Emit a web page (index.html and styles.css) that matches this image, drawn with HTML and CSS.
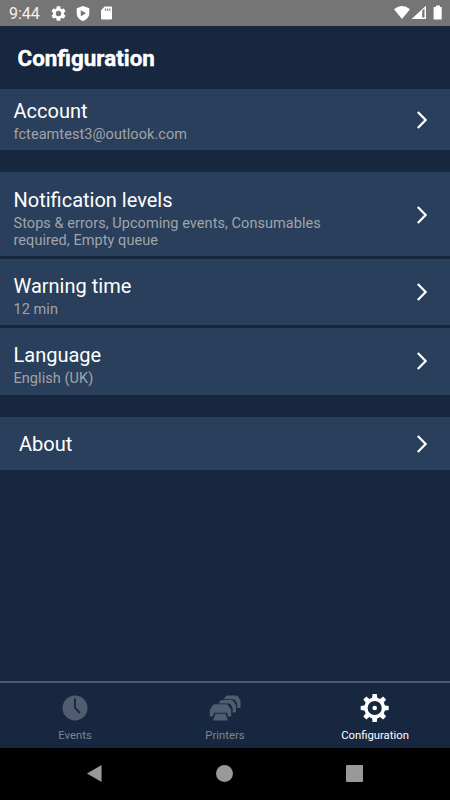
FILE: index.html
```html
<!DOCTYPE html>
<html lang="en">
<head>
<meta charset="utf-8">
<title>Configuration</title>
<link rel="stylesheet" href="styles.css">
</head>
<body>
<div class="status">
  <span class="clock">9:44</span>
  <svg class="gear" viewBox="2 2 20 20"><path d="M19.14 12.94a7 7 0 0 0 0-1.88l2.03-1.58a.5.5 0 0 0 .12-.61l-1.92-3.32a.5.5 0 0 0-.59-.22l-2.39.96a7 7 0 0 0-1.62-.94l-.36-2.54a.5.5 0 0 0-.48-.41h-3.84a.5.5 0 0 0-.47.41l-.36 2.54a7.300 7.300 0 0 0-1.620.94l-2.390-.96a.5.5 0 0 0-.59.22L2.740 8.870a.5.5 0 0 0 .12.61l2.030 1.580a7 7 0 0 0 0 1.880l-2.030 1.580a.5.5 0 0 0-.12.61l1.920 3.320c.12.22.37.29.59.22l2.390-.96c.5.38 1.030.7 1.620.94l.36 2.540c.05.24.24.41.48.41h3.840c.24 0 .44-.17.47-.41l.36-2.540a7 7 0 0 0 1.620-.94l2.390.96c.22.08.47 0 .59-.22l1.920-3.320a.5.5 0 0 0-.12-.61zM12 15.600a3.600 3.600 0 1 1 0-7.200 3.600 3.600 0 0 1 0 7.200z"/></svg>
  <svg class="shield" viewBox="0 0 14 15"><path fill-rule="evenodd" d="M7 0 13.300 2.300V7C13.300 10.800 10.700 13.900 7 15 3.300 13.900.7 10.800.7 7V2.300ZM4.800 4.200V10.300L10 7.200Z"/></svg>
  <svg class="card-icon" viewBox="0 0 12 14"><path d="M4 0h6.500A1.300 1.300 0 0 1 12 1.400V12.600A1.300 1.300 0 0 1 10.600 14H1.400A1.300 1.300 0 0 1 0 12.600V4Z"/><path class="slots" d="M4.200 2h1.500v2.500H4.200zM6.500 2H8v2.500H6.500zM8.800 2h1.500v2.500H8.800z"/></svg>
  <svg class="signals" viewBox="0 0 50 16"><path d="M0 4.300Q8-2.200 16 4.300L8 14Z"/><path fill-rule="evenodd" d="M32 .8V14H17.500ZM28.200 5.800V12.600H30.500V3.600Z"/><path d="M39.600 2H42V.5h4V2h1.700V14.500H39.600Z"/></svg>
</div>
<header class="header"><h1>Configuration</h1></header>
<main class="list">
  <section class="group">
    <div class="row account"><div class="copy"><h2>Account</h2><p>fcteamtest3@outlook.com</p></div><svg class="chevron" viewBox="0 0 10 18"><path d="M.8 1 8.600 9 .8 17"/></svg></div>
  </section>
  <section class="group">
    <div class="row levels"><div class="copy"><h2>Notification levels</h2><p>Stops &amp; errors, Upcoming events, Consumables<br>required, Empty queue</p></div><svg class="chevron" viewBox="0 0 10 18"><path d="M.8 1 8.600 9 .8 17"/></svg></div>
    <div class="row warning"><div class="copy"><h2>Warning time</h2><p>12 min</p></div><svg class="chevron" viewBox="0 0 10 18"><path d="M.8 1 8.600 9 .8 17"/></svg></div>
    <div class="row language"><div class="copy"><h2>Language</h2><p>English (UK)</p></div><svg class="chevron" viewBox="0 0 10 18"><path d="M.8 1 8.600 9 .8 17"/></svg></div>
  </section>
  <section class="group">
    <div class="row about"><div class="copy"><h2>About</h2></div><svg class="chevron" viewBox="0 0 10 18"><path d="M.8 1 8.600 9 .8 17"/></svg></div>
  </section>
</main>
<nav class="tabs">
  <div class="tab"><svg viewBox="0 0 32 30"><circle cx="16" cy="15" r="12.500" fill="#505d70"/><path d="M16 5.500V15L21 20" fill="none" stroke="#16273f" stroke-width="1.800"/></svg><span>Events</span></div>
  <div class="tab"><svg viewBox="0 0 32 30"><g fill="#505d70"><path d="M14.500 6.200 16.500 3.500Q17.200 2.500 18.500 2.500H27Q28.300 2.500 29 3.500L30.800 6.500Q31.500 7.500 31.500 9V15H28.200V11.500Q28.200 10.300 27.400 9.200L26.200 7.300Q25.500 6.200 24.200 6.200Z"/><path d="M9.300 10.400 11.300 7.700Q12 6.900 13.300 6.900H22.300Q23.600 6.900 24.300 7.900L26.300 11Q27 12.200 27 13.500V19.500H23.700V16Q23.700 14.700 22.900 13.500L21.700 11.500Q21 10.400 19.700 10.400Z"/><path d="M.8 23.500V18Q.8 16.700 1.600 15.500L3.700 12.200Q4.400 11.200 5.700 11.200H17.200Q18.500 11.200 19.200 12.200L21.300 15.500Q22.200 16.700 22.200 18V23.500H19.200L17.700 19.700H5.200L3.700 23.500Z"/><path d="M6.500 20.800H16.500L19 27.500H4Z"/></g></svg><span>Printers</span></div>
  <div class="tab active"><svg viewBox="0 0 32 30"><g fill="#fff"><g id="teeth"><path id="tooth" d="M13.600 1h4.200l.7 5h-5.600z"/><use href="#tooth" transform="rotate(45 15.700 15)"/><use href="#tooth" transform="rotate(90 15.700 15)"/><use href="#tooth" transform="rotate(135 15.700 15)"/></g><use href="#teeth" transform="rotate(180 15.700 15)"/><circle cx="15.700" cy="15" r="2.300"/></g><circle cx="15.700" cy="15" r="8.800" fill="none" stroke="#fff" stroke-width="3.400"/></svg><span>Configuration</span></div>
</nav>
<div class="system">
  <svg viewBox="0 0 16 18"><path d="M0 9 15.500 0V18Z"/></svg>
  <svg viewBox="0 0 16 16"><circle cx="8" cy="8" r="8"/></svg>
  <svg viewBox="0 0 17 17"><rect width="17" height="17" rx="1"/></svg>
</div>
</body>
</html>
```

FILE: styles.css
```css
* { box-sizing: border-box; }
body {
  margin: 0;
  height: 800px;
  display: flex;
  flex-direction: column;
  overflow: hidden;
  background: #16273f;
  color: #fff;
  font-family: Roboto, sans-serif;
}
h1, h2, p { margin: 0; font-weight: 400; }
svg { display: block; flex: none; }
.status {
  height: 26px;
  flex: none;
  display: flex;
  align-items: center;
  padding: 0 2px 0 9px;
  background: #757575;
}
.status svg { fill: #fff; }
.clock { width: 42px; padding-top: 2px; font-size: 16px; line-height: 26px; color: #f2f2f2; }
.gear { width: 15px; height: 15px; }
.shield { width: 14px; height: 15px; margin-left: 10px; }
.card-icon { width: 11px; height: 14px; margin-left: 11px; }
.status .slots { fill: #858585; }
.signals { width: 50px; height: 16px; margin: 0 4px 0 auto; }
.header { height: 63px; flex: none; padding: 17px 17.500px 0; }
h1 {
  font-size: 22.400px;
  line-height: 30px;
  font-weight: 700;
  -webkit-text-stroke: .4px #fff;
}
.list { flex: 1; display: flex; flex-direction: column; gap: 22px; }
.group { display: flex; flex-direction: column; gap: 3px; }
.row {
  display: flex;
  justify-content: space-between;
  align-items: center;
  padding: 0 23px 0 13.500px;
  background: #293f5c;
}
.copy { align-self: flex-start; padding-top: 10px; }
h2 { font-size: 20px; line-height: 24px; }
p {
  margin-top: 3px;
  font-size: 14.500px;
  line-height: 17px;
  letter-spacing: .06px;
  color: #a1a4a8;
}
.chevron { width: 10px; height: 18px; fill: none; stroke: #fff; stroke-width: 2.200; }
.account { height: 61px; }
.levels { height: 84px; }
.levels .copy { padding-top: 16px; }
.levels .chevron { margin-top: 1px; }
.warning .copy, .language .copy { padding-top: 15px; }
.warning { height: 66px; }
.language { height: 67px; }
.language .chevron { margin-bottom: 1px; }
.about { height: 53px; padding-left: 19px; }
.about .copy { padding-top: 15px; }
.tabs {
  height: 67px;
  flex: none;
  display: grid;
  grid-template-columns: repeat(3, 1fr);
  border-top: 2px solid #4b586b;
}
.tab {
  display: flex;
  flex-direction: column;
  align-items: center;
  padding-top: 9.500px;
  font-size: 11.300px;
  line-height: 14px;
  color: #7f858e;
}
.tab svg { width: 32px; height: 30px; margin-bottom: 6.500px; }
.active { color: #fff; }
.system {
  height: 52px;
  flex: none;
  display: flex;
  align-items: center;
  justify-content: space-between;
  padding: 0 87px 1px 86px;
  background: #000;
}
.system svg { fill: #999; height: 17px; width: 17px; }
```
